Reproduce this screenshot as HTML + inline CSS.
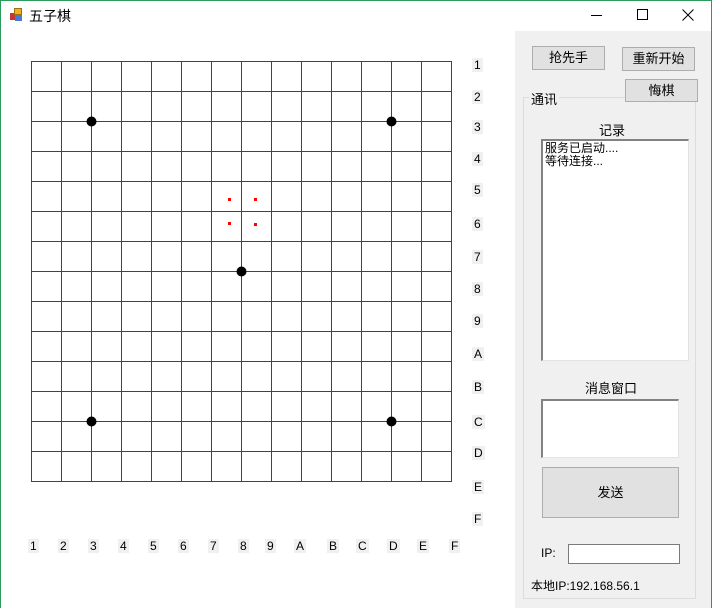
<!DOCTYPE html>
<html><head><meta charset="utf-8"><style>
*{margin:0;padding:0;box-sizing:border-box}
body{width:712px;height:608px;background:#fff;position:relative;overflow:hidden;font-family:"Liberation Sans","Noto Sans CJK SC",sans-serif;font-size:12px;color:#000}
.a{position:absolute}
.lb{position:absolute;background:#f0f0f0;font-size:12px;line-height:14px;padding:0 2px;color:#000}
.btn{position:absolute;background:#e1e1e1;border:1px solid #adadad;text-align:center;font-size:13px}
</style></head><body>
<div class="a" style="left:0;top:0;width:712px;height:608px;border:1px solid #2a9a5a;border-bottom:none"></div>
<div class="a" style="left:10px;top:8px;width:14px;height:14px">
<div class="a" style="left:0;top:5px;width:5px;height:7px;background:#c33"></div>
<div class="a" style="left:4px;top:0;width:8px;height:7px;background:#f0b020;border:1px solid #a07010"></div>
<div class="a" style="left:5px;top:7px;width:7px;height:6px;background:#4a7ad0"></div></div>
<div class="a" style="left:29px;top:6px;font-size:14px">五子棋</div>
<div class="a" style="left:591px;top:15px;width:11px;height:1px;background:#000"></div>
<div class="a" style="left:637px;top:9px;width:11px;height:11px;border:1px solid #000"></div>
<svg class="a" style="left:682px;top:9px" width="12" height="12"><path d="M0.5 0.5L11.5 11.5M11.5 0.5L0.5 11.5" stroke="#000" stroke-width="1"/></svg>
<div class="a" style="left:515px;top:31px;width:196px;height:577px;background:#f0f0f0"></div>
<svg class="a" style="left:0;top:0" width="500" height="500">
<g stroke="#e00000" stroke-width="1" shape-rendering="crispEdges">
<path d="M31.5 61V482M61.5 61V482M91.5 61V482M121.5 61V482M151.5 61V482M181.5 61V482M211.5 61V482M241.5 61V482M271.5 61V482M301.5 61V482M331.5 61V482M361.5 61V482M391.5 61V482M421.5 61V482M451.5 61V482"/>
<path d="M31 61.5H452M31 91.5H452M31 121.5H452M31 151.5H452M31 181.5H452M31 211.5H452M31 241.5H452M31 271.5H452M31 301.5H452M31 331.5H452M31 361.5H452M31 391.5H452M31 421.5H452M31 451.5H452M31 481.5H452"/>
</g>
<g fill="#000"><circle cx="91.5" cy="121.5" r="5"/><circle cx="391.5" cy="121.5" r="5"/><circle cx="241.5" cy="271.5" r="5"/><circle cx="91.5" cy="421.5" r="5"/><circle cx="391.5" cy="421.5" r="5"/></g>
<g fill="#f00"><rect x="228" y="198" width="3" height="3"/><rect x="254" y="198" width="3" height="3"/><rect x="228" y="222" width="3" height="3"/><rect x="254" y="223" width="3" height="3"/></g>
</svg>
<div class="lb" style="left:472px;top:58px">1</div>
<div class="lb" style="left:472px;top:90px">2</div>
<div class="lb" style="left:472px;top:120px">3</div>
<div class="lb" style="left:472px;top:152px">4</div>
<div class="lb" style="left:472px;top:183px">5</div>
<div class="lb" style="left:472px;top:217px">6</div>
<div class="lb" style="left:472px;top:250px">7</div>
<div class="lb" style="left:472px;top:282px">8</div>
<div class="lb" style="left:472px;top:314px">9</div>
<div class="lb" style="left:472px;top:347px">A</div>
<div class="lb" style="left:472px;top:380px">B</div>
<div class="lb" style="left:472px;top:415px">C</div>
<div class="lb" style="left:472px;top:446px">D</div>
<div class="lb" style="left:472px;top:480px">E</div>
<div class="lb" style="left:472px;top:512px">F</div>
<div class="lb" style="left:28px;top:539px">1</div>
<div class="lb" style="left:58px;top:539px">2</div>
<div class="lb" style="left:88px;top:539px">3</div>
<div class="lb" style="left:118px;top:539px">4</div>
<div class="lb" style="left:148px;top:539px">5</div>
<div class="lb" style="left:178px;top:539px">6</div>
<div class="lb" style="left:208px;top:539px">7</div>
<div class="lb" style="left:238px;top:539px">8</div>
<div class="lb" style="left:265px;top:539px">9</div>
<div class="lb" style="left:294px;top:539px">A</div>
<div class="lb" style="left:327px;top:539px">B</div>
<div class="lb" style="left:356px;top:539px">C</div>
<div class="lb" style="left:387px;top:539px">D</div>
<div class="lb" style="left:417px;top:539px">E</div>
<div class="lb" style="left:449px;top:539px">F</div>
<div class="btn" style="left:532px;top:46px;width:73px;height:24px;line-height:22px">抢先手</div>
<div class="btn" style="left:622px;top:47px;width:73px;height:24px;line-height:22px">重新开始</div>
<div class="a" style="left:523px;top:97px;width:173px;height:502px;border:1px solid #dcdcdc"></div>
<div class="a" style="left:529px;top:89px;background:#f0f0f0;padding:0 2px;font-size:13px">通讯</div>
<div class="btn" style="left:625px;top:79px;width:73px;height:23px;line-height:21px">悔棋</div>
<div class="a" style="left:599px;top:120px;font-size:13px">记录</div>
<div class="a" style="left:541px;top:139px;width:148px;height:222px;background:#fff;border:1px solid #828282;border-right-color:#e3e3e3;border-bottom-color:#e3e3e3;border-width:2px 1px 1px 2px;padding:1px 2px;font-size:12px;line-height:13px;color:#000">服务已启动....<br>等待连接...</div>
<div class="a" style="left:585px;top:378px;font-size:13px">消息窗口</div>
<div class="a" style="left:541px;top:399px;width:138px;height:59px;background:#fff;border:1px solid #828282;border-right-color:#e3e3e3;border-bottom-color:#e3e3e3;border-width:2px 1px 1px 2px"></div>
<div class="btn" style="left:542px;top:467px;width:137px;height:51px;line-height:49px">发送</div>
<div class="a" style="left:541px;top:546px">IP:</div>
<div class="a" style="left:568px;top:544px;width:112px;height:20px;background:#fff;border:1px solid #7a7a7a"></div>
<div class="a" style="left:531px;top:577px">本地IP:192.168.56.1</div>
</body></html>
